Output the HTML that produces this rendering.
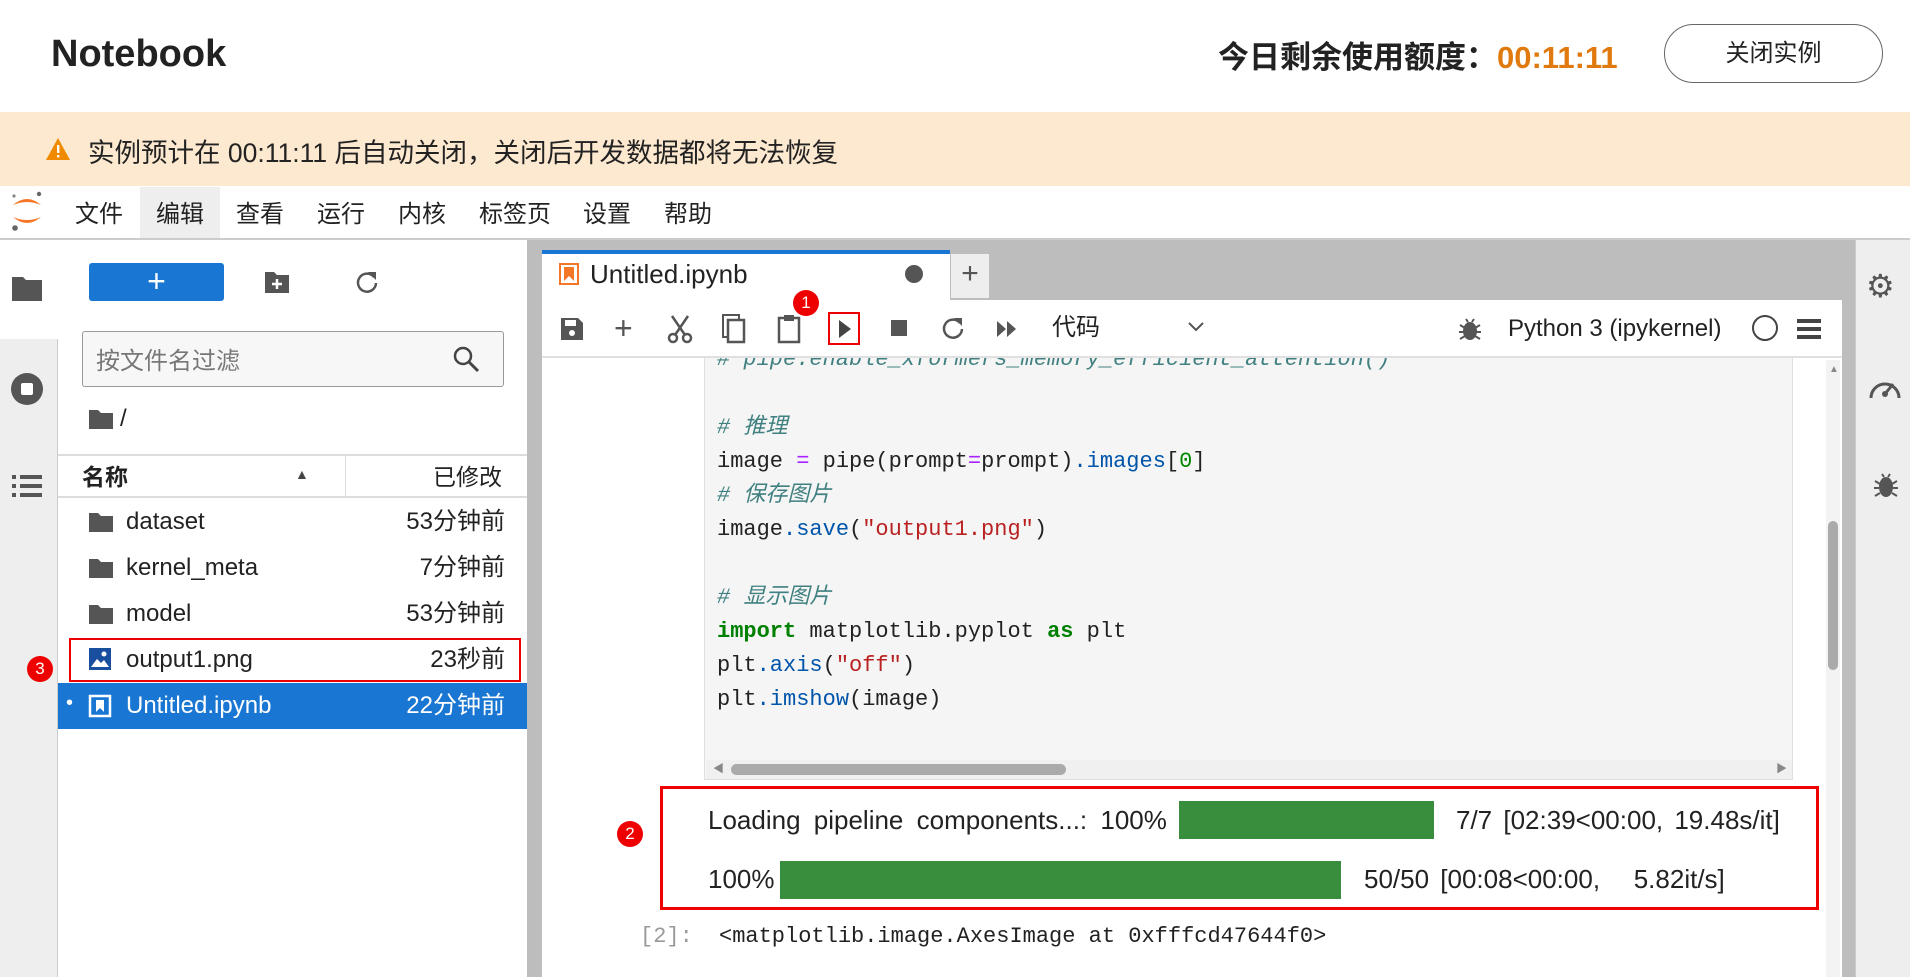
<!DOCTYPE html>
<html><head><meta charset="utf-8"><style>
*{margin:0;padding:0;box-sizing:border-box}
body{width:1910px;height:977px;overflow:hidden;background:#fff;font-family:"Liberation Sans","Noto Sans CJK SC",sans-serif;color:#222;position:relative;line-height:1.15}
.a{position:absolute;white-space:nowrap}
.mono{font-family:"Liberation Mono","Noto Sans CJK SC",monospace}
.c{color:#408080;font-style:italic}
.k{color:#008000;font-weight:bold}
.s{color:#ba2121}
.f{color:#0055aa}
.o{color:#aa22ff}
.n{color:#080}
.badge{position:absolute;width:26px;height:26px;border-radius:50%;background:#e00;color:#fff;font-size:17px;text-align:center;line-height:26px}
</style></head><body>
<!-- header -->
<div class="a" style="left:51px;top:33px;font-size:38px;font-weight:bold;color:#222">Notebook</div>
<div class="a" style="left:1218px;top:40px;font-size:31px;font-weight:bold;color:#222">今日剩余使用额度：<span style="color:#e07a0e">00:11:11</span></div>
<div class="a" style="left:1664px;top:24px;width:219px;height:59px;border:1px solid #666;border-radius:30px;font-size:24px;text-align:center;line-height:57px">关闭实例</div>
<!-- warning -->
<div class="a" style="left:0;top:112px;width:1910px;height:74px;background:#fde9d0"></div>
<svg class="a" style="left:45px;top:137px" width="26" height="24" viewBox="0 0 26 24"><path d="M13 1 L25 23 L1 23 Z" fill="#f08a00"/><rect x="12" y="8" width="2.4" height="8" fill="#fff"/><rect x="12" y="18" width="2.4" height="2.4" fill="#fff"/></svg>
<div class="a" style="left:88px;top:138px;font-size:26.5px;color:#222">实例预计在 00:11:11 后自动关闭，关闭后开发数据都将无法恢复</div>
<!-- menu -->
<div class="a" style="left:0;top:238px;width:1910px;height:2px;background:#ccc"></div>
<svg class="a" style="left:8px;top:188px" width="38" height="46" viewBox="0 0 38 46"><path d="M5 17 Q19 5 33 17 Q19 11 5 17Z" fill="#f37726"/><path d="M5 29 Q19 41 33 29 Q19 35 5 29Z" fill="#f37726"/><circle cx="31" cy="6" r="2.2" fill="#666"/><circle cx="7" cy="40" r="2.8" fill="#666"/><circle cx="6" cy="8" r="1.6" fill="#888"/></svg>
<div class="a" style="left:140px;top:187px;width:80px;height:51px;background:#eee"></div>
<div class="a" style="top:201px;left:75px;font-size:24px">文件</div>
<div class="a" style="top:201px;left:156px;font-size:24px">编辑</div>
<div class="a" style="top:201px;left:236px;font-size:24px">查看</div>
<div class="a" style="top:201px;left:317px;font-size:24px">运行</div>
<div class="a" style="top:201px;left:398px;font-size:24px">内核</div>
<div class="a" style="top:201px;left:479px;font-size:24px">标签页</div>
<div class="a" style="top:201px;left:583px;font-size:24px">设置</div>
<div class="a" style="top:201px;left:664px;font-size:24px">帮助</div>
<!-- left activity bar -->
<div class="a" style="left:0;top:240px;width:58px;height:737px;background:#eee;border-right:1px solid #ccc"></div>
<div class="a" style="left:0;top:240px;width:58px;height:99px;background:#fff"></div>
<svg class="a" style="left:11px;top:274px" width="32" height="28"><path d="M1 3h11l3 3h16v21H1z" fill="#555"/></svg>
<svg class="a" style="left:10px;top:372px" width="34" height="34"><circle cx="17" cy="17" r="16" fill="#555"/><rect x="11" y="11" width="12" height="12" rx="2" fill="#fff"/></svg>
<svg class="a" style="left:12px;top:474px" width="30" height="24"><g fill="#555"><rect x="0" y="1" width="4" height="4"/><rect x="8" y="1" width="22" height="4"/><rect x="0" y="10" width="4" height="4"/><rect x="8" y="10" width="22" height="4"/><rect x="0" y="19" width="4" height="4"/><rect x="8" y="19" width="22" height="4"/></g></svg>
<!-- file panel -->
<div class="a" style="left:89px;top:263px;width:135px;height:38px;background:#1976d2;border-radius:3px;color:#fff;font-size:32px;text-align:center;line-height:36px">+</div>
<svg class="a" style="left:264px;top:270px" width="26" height="24"><path d="M1 2h9l3 3h12v18H1z" fill="#555"/><path d="M13 9v10M8 14h10" stroke="#fff" stroke-width="2.5"/></svg>
<svg class="a" style="left:354px;top:269px" width="26" height="26"><path d="M20 8A9 9 0 1 0 22 14" fill="none" stroke="#555" stroke-width="2.5"/><path d="M14 3L22 3L22 11Z" fill="#555"/></svg>
<div class="a" style="left:82px;top:331px;width:422px;height:56px;border:1px solid #999;border-radius:3px;background:#f7f7f7"></div>
<div class="a" style="left:96px;top:348px;font-size:24px;color:#777">按文件名过滤</div>
<svg class="a" style="left:452px;top:345px" width="28" height="28"><circle cx="11" cy="11" r="8" fill="none" stroke="#444" stroke-width="2.5"/><path d="M17 17L26 26" stroke="#444" stroke-width="3"/></svg>
<svg class="a" style="left:88px;top:408px" width="26" height="22"><path d="M1 2h9l3 3h12v16H1z" fill="#555"/></svg>
<div class="a" style="left:120px;top:405px;font-size:24px">/</div>
<div class="a" style="left:58px;top:454px;width:469px;height:44px;border-top:2px solid #ddd;border-bottom:2px solid #ddd"></div>
<div class="a" style="left:345px;top:456px;width:1px;height:40px;background:#ddd"></div>
<div class="a" style="left:82px;top:464px;font-size:23px;font-weight:bold">名称</div>
<div class="a" style="left:295px;top:466px;font-size:14px;color:#444">▲</div>
<div class="a" style="left:433px;top:464px;font-size:23px">已修改</div>
<div class="a" style="left:58px;top:683px;width:469px;height:46px;background:#1976d2"></div>
<svg class="a" style="left:88px;top:511px" width="26" height="22"><path d="M1 2h9l3 3h12v16H1z" fill="#555"/></svg>
<div class="a" style="left:126px;top:508px;font-size:24px">dataset</div><div class="a" style="right:1405px;top:508px;font-size:24px">53分钟前</div>
<svg class="a" style="left:88px;top:557px" width="26" height="22"><path d="M1 2h9l3 3h12v16H1z" fill="#555"/></svg>
<div class="a" style="left:126px;top:554px;font-size:24px">kernel_meta</div><div class="a" style="right:1405px;top:554px;font-size:24px">7分钟前</div>
<svg class="a" style="left:88px;top:603px" width="26" height="22"><path d="M1 2h9l3 3h12v16H1z" fill="#555"/></svg>
<div class="a" style="left:126px;top:600px;font-size:24px">model</div><div class="a" style="right:1405px;top:600px;font-size:24px">53分钟前</div>
<svg class="a" style="left:88px;top:647px" width="24" height="24"><rect x="1" y="1" width="22" height="22" fill="#1a4fa0"/><path d="M3 20L9 12L13 16L16 13L21 20Z" fill="#fff"/><circle cx="16" cy="7" r="2.5" fill="#fff"/></svg>
<div class="a" style="left:126px;top:646px;font-size:24px">output1.png</div><div class="a" style="right:1405px;top:646px;font-size:24px">23秒前</div>
<div class="a" style="left:69px;top:638px;width:452px;height:44px;border:2px solid #e00"></div>
<div class="badge" style="left:27px;top:656px">3</div>
<div class="a" style="left:66px;top:692px;font-size:20px;color:#fff">•</div>
<svg class="a" style="left:88px;top:694px" width="24" height="24"><rect x="2" y="2" width="20" height="20" fill="none" stroke="#fff" stroke-width="2.5"/><path d="M8 6h8v12l-4-4-4 4z" fill="#fff"/></svg>
<div class="a" style="left:126px;top:692px;font-size:24px;color:#fff">Untitled.ipynb</div><div class="a" style="right:1405px;top:692px;font-size:24px;color:#fff">22分钟前</div>
<!-- main gray -->
<div class="a" style="left:527px;top:240px;width:1328px;height:737px;background:#bdbdbd"></div>
<div class="a" style="left:542px;top:250px;width:408px;height:50px;background:#fff;border-top:4px solid #1976d2"></div>
<svg class="a" style="left:559px;top:263px" width="20" height="22"><rect x="1" y="1" width="18" height="20" fill="none" stroke="#f37726" stroke-width="2"/><path d="M5 4h10v14l-5-5-5 5z" fill="#f37726"/></svg>
<div class="a" style="left:590px;top:260px;font-size:26px">Untitled.ipynb</div>
<div class="a" style="left:905px;top:265px;width:18px;height:18px;border-radius:50%;background:#555"></div>
<div class="a" style="left:951px;top:254px;width:38px;height:44px;background:#eee;font-size:30px;text-align:center;line-height:40px;color:#555">+</div>
<div class="a" style="left:542px;top:300px;width:1300px;height:677px;background:#fff"></div>
<!-- code cell -->
<div class="a" style="left:704px;top:358px;width:1089px;height:422px;background:#f5f5f5;border:1px solid #e0e0e0;border-top:none;overflow:hidden">
<div class="a mono" style="left:12px;top:-15px;font-size:22px;line-height:34px">
<div class="c" style="height:34px">#&nbsp;pipe.enable_xformers_memory_efficient_attention()</div>
<div style="height:34px"></div>
<div class="c" style="height:34px">#&nbsp;推理</div>
<div style="height:34px">image <span class="o">=</span> pipe(prompt<span class="o">=</span>prompt)<span class="f">.images</span>[<span class="n">0</span>]</div>
<div class="c" style="height:34px">#&nbsp;保存图片</div>
<div style="height:34px">image<span class="f">.save</span>(<span class="s">"output1.png"</span>)</div>
<div style="height:34px"></div>
<div class="c" style="height:34px">#&nbsp;显示图片</div>
<div style="height:34px"><span class="k">import</span> matplotlib.pyplot <span class="k">as</span> plt</div>
<div style="height:34px">plt<span class="f">.axis</span>(<span class="s">"off"</span>)</div>
<div style="height:34px">plt<span class="f">.imshow</span>(image)</div>
</div></div>
<div class="a" style="left:542px;top:356px;width:1300px;height:2px;background:#e0e0e0"></div>
<div class="a" style="left:706px;top:760px;width:1086px;height:19px;background:#f0f0f0"></div>
<div class="a" style="left:731px;top:764px;width:335px;height:11px;background:#aaa;border-radius:6px"></div>
<div class="a" style="left:713px;top:763px;font-size:11px;color:#888">◀</div>
<div class="a" style="left:1776px;top:763px;font-size:11px;color:#888">▶</div>
<div class="a" style="left:1826px;top:360px;width:14px;height:617px;background:#f3f3f3"></div>
<div class="a" style="left:1828px;top:521px;width:10px;height:149px;background:#aaa;border-radius:5px"></div>
<div class="a" style="left:1829px;top:364px;font-size:10px;color:#888">▲</div>
<!-- toolbar -->
<svg class="a" style="left:560px;top:317px" width="24" height="24"><path d="M1 1h17l5 5v17H1z" fill="#555"/><rect x="5" y="3" width="11" height="6" fill="#fff"/><circle cx="12" cy="16" r="3" fill="#fff"/></svg>
<div class="a" style="left:614px;top:310px;font-size:32px;color:#555">+</div>
<svg class="a" style="left:666px;top:314px" width="28" height="30"><circle cx="7" cy="24" r="4" fill="none" stroke="#555" stroke-width="2.5"/><circle cx="21" cy="24" r="4" fill="none" stroke="#555" stroke-width="2.5"/><path d="M9 21L22 2M19 21L6 2" stroke="#555" stroke-width="2.5"/></svg>
<svg class="a" style="left:722px;top:314px" width="24" height="30"><rect x="1" y="1" width="16" height="22" fill="none" stroke="#555" stroke-width="2"/><rect x="6" y="6" width="16" height="22" fill="#fff" stroke="#555" stroke-width="2.5"/></svg>
<svg class="a" style="left:777px;top:314px" width="24" height="30"><rect x="2" y="4" width="20" height="24" fill="none" stroke="#555" stroke-width="2.5"/><rect x="7" y="1" width="10" height="6" fill="#555"/></svg>
<div class="badge" style="left:793px;top:290px">1</div>
<div class="a" style="left:828px;top:312px;width:32px;height:33px;border:2px solid #e00"></div>
<svg class="a" style="left:837px;top:319px" width="16" height="20"><path d="M2 1L14 10L2 19Z" fill="#444"/></svg>
<div class="a" style="left:891px;top:320px;width:16px;height:16px;background:#555"></div>
<svg class="a" style="left:940px;top:315px" width="26" height="26"><path d="M20 8A9 9 0 1 0 22 14" fill="none" stroke="#555" stroke-width="2.5"/><path d="M14 3L22 3L22 11Z" fill="#555"/></svg>
<svg class="a" style="left:996px;top:320px" width="22" height="18"><path d="M1 1L10 9L1 17ZM11 1L20 9L11 17Z" fill="#555"/></svg>
<div class="a" style="left:1052px;top:314px;font-size:24px">代码</div>
<svg class="a" style="left:1187px;top:321px" width="18" height="12"><path d="M2 2L9 9L16 2" fill="none" stroke="#555" stroke-width="2"/></svg>
<svg class="a" style="left:1458px;top:316px" width="24" height="26"><ellipse cx="12" cy="15" rx="7" ry="9" fill="#555"/><path d="M2 9l5 3M22 9l-5 3M1 16h5M23 16h-5M2 23l5-3M22 23l-5-3M8 3l2 3M16 3l-2 3" stroke="#555" stroke-width="2"/></svg>
<div class="a" style="left:1508px;top:315px;font-size:24px">Python 3 (ipykernel)</div>
<div class="a" style="left:1752px;top:315px;width:26px;height:26px;border:2px solid #444;border-radius:50%"></div>
<svg class="a" style="left:1797px;top:319px" width="24" height="20"><rect y="0" width="24" height="4" fill="#444"/><rect y="8" width="24" height="4" fill="#444"/><rect y="16" width="24" height="4" fill="#444"/></svg>
<!-- output -->
<div class="a" style="left:660px;top:786px;width:1159px;height:124px;border:3px solid #e00"></div>
<div class="badge" style="left:617px;top:821px">2</div>
<div class="a" style="left:708px;top:806px;font-size:26px;word-spacing:6px">Loading pipeline components...: 100%</div>
<div class="a" style="left:1179px;top:801px;width:255px;height:38px;background:#388e3c"></div>
<div class="a" style="left:1456px;top:806px;font-size:26px;word-spacing:4px">7/7 [02:39&lt;00:00, 19.48s/it]</div>
<div class="a" style="left:708px;top:865px;font-size:26px">100%</div>
<div class="a" style="left:780px;top:861px;width:561px;height:38px;background:#388e3c"></div>
<div class="a" style="left:1364px;top:865px;font-size:26px;word-spacing:4px">50/50 [00:08&lt;00:00,&nbsp;&nbsp; 5.82it/s]</div>
<div class="a mono" style="left:640px;top:924px;font-size:22px;color:#999">[2]:</div>
<div class="a mono" style="left:719px;top:924px;font-size:22px">&lt;matplotlib.image.AxesImage at 0xfffcd47644f0&gt;</div>
<!-- right sidebar -->
<div class="a" style="left:1855px;top:240px;width:55px;height:737px;background:#eee;border-left:1px solid #ccc"></div>
<div class="a" style="left:1866px;top:268px;font-size:32px;color:#555">⚙</div>
<svg class="a" style="left:1868px;top:372px" width="34" height="30"><path d="M3 26A14 14 0 1 1 31 26" fill="none" stroke="#555" stroke-width="3"/><path d="M17 22L25 12" stroke="#555" stroke-width="3"/><circle cx="17" cy="22" r="3" fill="#555"/></svg>
<svg class="a" style="left:1873px;top:471px" width="26" height="28"><ellipse cx="13" cy="16" rx="7" ry="10" fill="#555"/><path d="M2 10l5 3M24 10l-5 3M1 17h5M25 17h-5M2 25l5-3M24 25l-5-3M9 3l2 3M17 3l-2 3" stroke="#555" stroke-width="2"/></svg>
</body></html>
